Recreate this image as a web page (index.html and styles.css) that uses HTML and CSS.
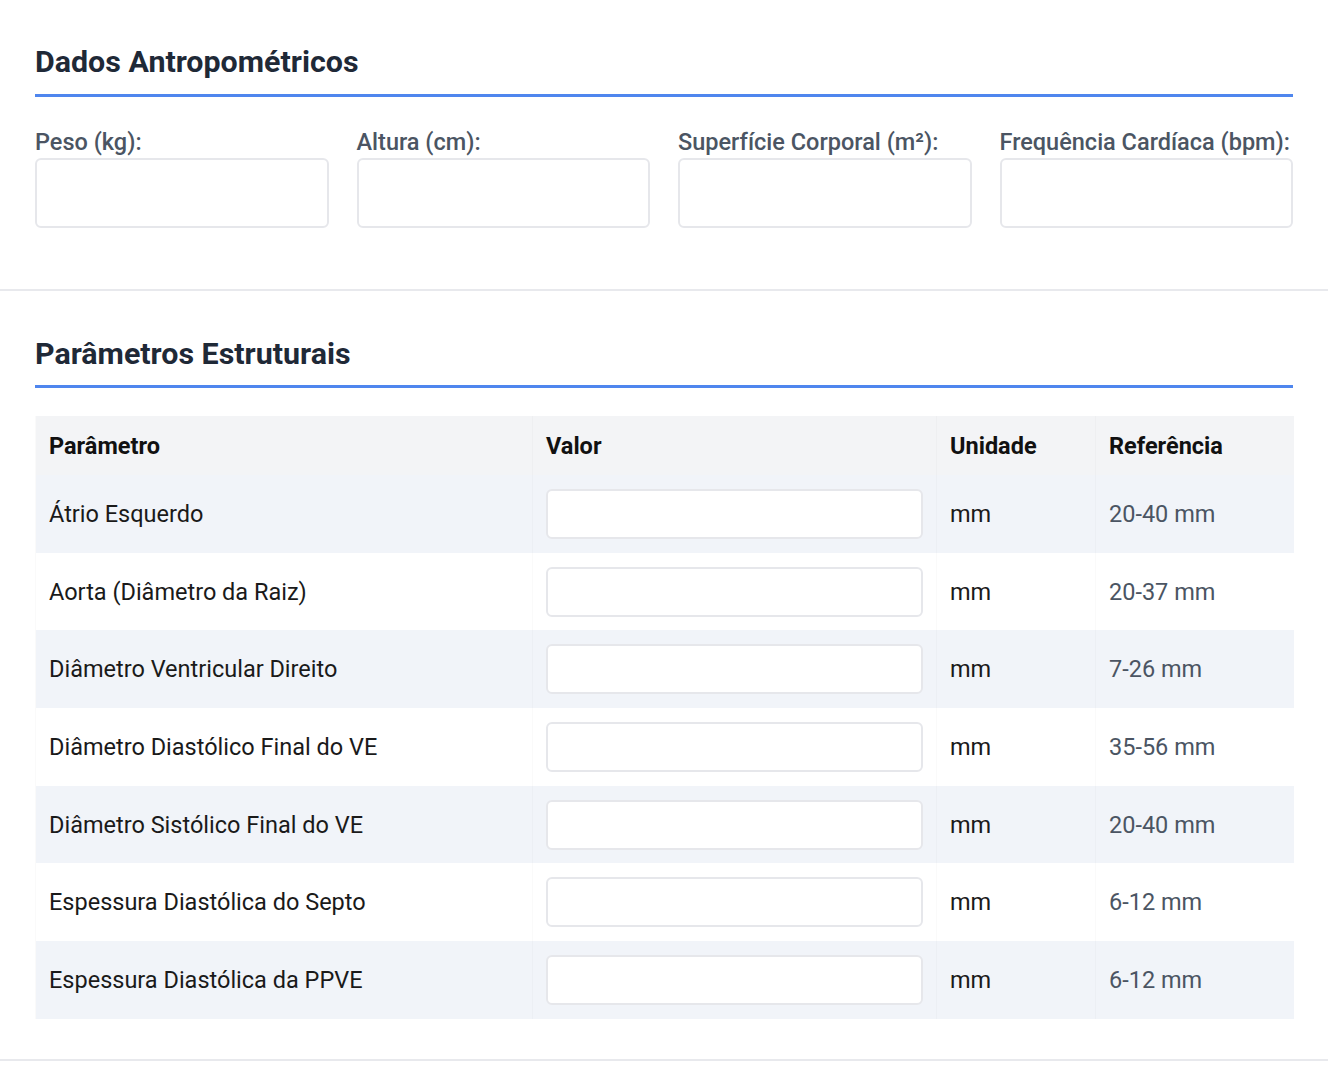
FILE: index.html
```html
<!DOCTYPE html>
<html lang="pt">
<head>
<meta charset="utf-8">
<title>Ecocardiograma</title>
<link rel="stylesheet" href="styles.css">
</head>
<body>
<section class="section">
  <h2 class="section-title">Dados Antropométricos</h2>
  <div class="field-grid">
    <div class="field"><label class="field-label">Peso (kg):</label><input class="field-input" type="text"></div>
    <div class="field"><label class="field-label">Altura (cm):</label><input class="field-input" type="text"></div>
    <div class="field"><label class="field-label">Superfície Corporal (m²):</label><input class="field-input" type="text"></div>
    <div class="field"><label class="field-label">Frequência Cardíaca (bpm):</label><input class="field-input" type="text"></div>
  </div>
</section>
<section class="section section-table">
  <h2 class="section-title">Parâmetros Estruturais</h2>
  <table class="params">
    <colgroup>
      <col class="c-param"><col class="c-val"><col class="c-unit"><col class="c-ref">
    </colgroup>
    <thead>
      <tr><th>Parâmetro</th><th>Valor</th><th>Unidade</th><th>Referência</th></tr>
    </thead>
    <tbody>
      <tr><td>Átrio Esquerdo</td><td><input class="cell-input" type="text"></td><td>mm</td><td class="ref">20-40 mm</td></tr>
      <tr><td>Aorta (Diâmetro da Raiz)</td><td><input class="cell-input" type="text"></td><td>mm</td><td class="ref">20-37 mm</td></tr>
      <tr><td>Diâmetro Ventricular Direito</td><td><input class="cell-input" type="text"></td><td>mm</td><td class="ref">7-26 mm</td></tr>
      <tr><td>Diâmetro Diastólico Final do VE</td><td><input class="cell-input" type="text"></td><td>mm</td><td class="ref">35-56 mm</td></tr>
      <tr><td>Diâmetro Sistólico Final do VE</td><td><input class="cell-input" type="text"></td><td>mm</td><td class="ref">20-40 mm</td></tr>
      <tr><td>Espessura Diastólica do Septo</td><td><input class="cell-input" type="text"></td><td>mm</td><td class="ref">6-12 mm</td></tr>
      <tr><td>Espessura Diastólica da PPVE</td><td><input class="cell-input" type="text"></td><td>mm</td><td class="ref">6-12 mm</td></tr>
    </tbody>
  </table>
</section>
</body>
</html>
```
FILE: styles.css
```css
* { box-sizing: border-box; }
html, body { margin: 0; padding: 0; background: #fff; }
body { font-family: Roboto, "Liberation Sans", Arial, sans-serif; color: #1a1a1a; }

.section {
  padding: 45px 35px 0;
  border-bottom: 2px solid #e8e9ed;
}
.section:first-child { height: 291px; }
.section-table { padding-bottom: 40px; }

.section-title {
  margin: 0 0 32px;
  font-size: 30.4px;
  line-height: 34px;
  font-weight: 700;
  color: #1f2937;
  padding-bottom: 15px;
  border-bottom: 3px solid #4f86ee;
}
.section-table .section-title { margin-bottom: 28px; padding-top: 1px; padding-bottom: 14px; }

.field-grid {
  display: grid;
  grid-template-columns: repeat(4, 1fr);
  gap: 28px;
}
.field { display: flex; flex-direction: column; }
.field-label {
  font-size: 23.5px;
  line-height: 26px;
  font-weight: 500;
  color: #4b5563;
  margin-bottom: 3px;
  white-space: nowrap;
}
.field-input {
  height: 70px;
  border: 2px solid #e6e7eb;
  border-radius: 6px;
  background: #fff;
  font: inherit;
}

.params {
  width: 100%;
  border-collapse: collapse;
  table-layout: fixed;
  font-size: 23.5px;
}
.c-param { width: 497px; }
.c-val { width: 404px; }
.c-unit { width: 159px; }
.c-ref { width: 198px; }

.params th, .params td {
  text-align: left;
  padding: 0 13px 0 13px;
  border-left: 1px solid rgba(0,0,0,0.018);
}
.params th {
  height: 59px;
  background: #f3f4f6;
  font-weight: 700;
  color: #111;
}
.params td { height: 77.7px; color: #1a1a1a; }
.params tbody tr:nth-child(odd) td { background: #f1f4f9; }
.params td.ref { color: #4b5563; }

.cell-input {
  display: block;
  width: 100%;
  height: 50px;
  border: 2px solid #e6e7eb;
  border-radius: 6px;
  background: #fff;
  font: inherit;
}
```
